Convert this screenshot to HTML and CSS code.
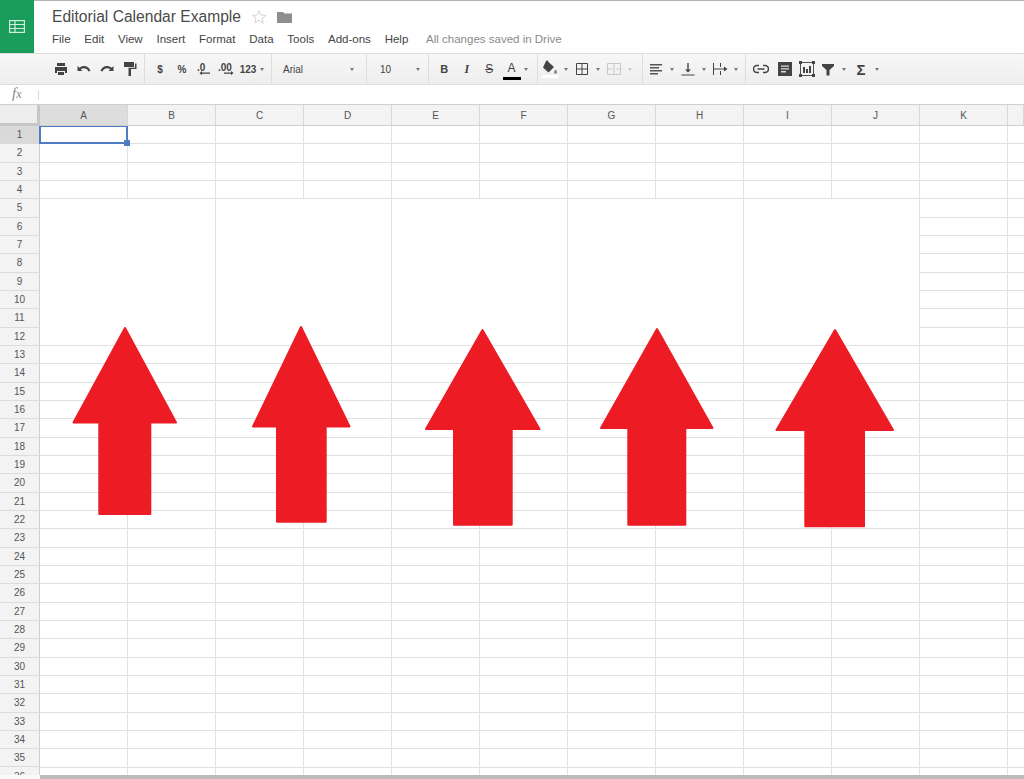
FILE: index.html
```html
<!DOCTYPE html>
<html lang="en">
<head>
    <meta charset="UTF-8">
    <title>Editorial Calendar Example</title>
    <link rel="stylesheet" href="styles.css">
</head>
<body>
<div class="page">

    <header class="topbar">
        <div class="logo">
            <svg width="18" height="15" viewBox="0 0 18 15" fill="none" stroke="#cfeedd" stroke-width="1.2">
                <rect x="1.6" y="1.6" width="14.8" height="11.8"/>
                <path d="M1.6 5.5h14.8M1.6 9.5h14.8M7 1.6v11.8"/>
            </svg>
        </div>
        <div class="doc">
            <div class="title-row">
                <span class="title">Editorial Calendar Example</span>
                <svg class="star" width="16" height="16" viewBox="0 0 16 16" fill="none" stroke="#d4d4d4">
                    <path d="M8 1.5l1.9 4.5 4.8.4-3.7 3.1 1.2 4.8L8 11.2l-4.2 2.6L5 9 1.300 6.400l4.800-.4z"/>
                </svg>
                <svg class="folder" width="15" height="12" viewBox="0 0 15 12" fill="#8e8e8e">
                    <path d="M0 1h6l1.500 1.500H15V12H0z"/>
                </svg>
            </div>
            <nav class="menu">
                <span>File</span><span>Edit</span><span>View</span><span>Insert</span><span>Format</span><span>Data</span><span>Tools</span><span>Add-ons</span><span>Help</span>
                <span class="saved">All changes saved in Drive</span>
            </nav>
        </div>
    </header>

    <div class="toolbar">
        <div class="tb-group g-print">
            <span class="tb-btn"><svg width="16" height="16" viewBox="0 0 16 16" fill="#444"><path d="M4 2h8v3H4zM2 6h12v6h-2v-2H4v2H2zM5 11h6v3H5z"/></svg></span>
            <span class="tb-btn"><svg width="16" height="16" viewBox="0 0 16 16" fill="#444"><path d="M1.500 5v5h5L4.700 8.300C7.300 6.300 11 7 12.500 10.500l2-.7C12.800 5 7.500 3.500 3.300 6.800z"/></svg></span>
            <span class="tb-btn"><svg width="16" height="16" viewBox="0 0 16 16" fill="#444"><path d="M14.500 5v5h-5l1.800-1.700C8.700 6.300 5 7 3.500 10.500l-2-.7C3.200 5 8.500 3.500 12.700 6.800z"/></svg></span>
            <span class="tb-btn"><svg width="16" height="16" viewBox="0 0 16 16" fill="#444"><path d="M2 1h10v5H2zM13 2.500h1.500V8H9v7H6.500V6.800h6.500z"/></svg></span>
        </div>
        <div class="tb-group g-number">
            <span class="tb-btn tb-text">$</span>
            <span class="tb-btn tb-text">%</span>
            <span class="tb-btn">
                <svg width="20" height="16" viewBox="0 0 20 16" fill="#444">
                    <text x="3" y="10" class="svg-label">.0</text>
                    <path d="M8 11.500h8v1.200H8zM8 10l-2.500 2.100L8 14.200z"/>
                </svg>
            </span>
            <span class="tb-btn">
                <svg width="20" height="16" viewBox="0 0 20 16" fill="#444">
                    <text x="2" y="10" class="svg-label">.00</text>
                    <path d="M8 11.500h8v1.200H8zM15 10l2.500 2.100-2.500 2.100z"/>
                </svg>
            </span>
            <span class="tb-btn tb-text">123</span>
            <span class="caret caret-near"></span>
        </div>
        <div class="tb-group g-font">
            <span class="tb-select">Arial</span>
            <span class="caret"></span>
        </div>
        <div class="tb-group g-size">
            <span class="tb-select">10</span>
            <span class="caret"></span>
        </div>
        <div class="tb-group g-style">
            <span class="tb-btn tb-bold">B</span>
            <span class="tb-btn tb-italic">I</span>
            <span class="tb-btn tb-strike">S</span>
            <span class="tb-btn tb-color">A</span>
            <span class="caret caret-near"></span>
        </div>
        <div class="tb-group g-fill">
            <span class="tb-btn"><svg width="20" height="20" viewBox="0 0 20 20" fill="#444"><path d="M6 2l1.200-.8L9 3.500l5 4.500-5.500 5.500L3 8.500z"/><path d="M15.500 10.500c1 1.300 1.500 2 1.500 2.700a1.500 1.500 0 0 1-3 0c0-.7.500-1.400 1.500-2.700z" fill="#888"/><rect x="2" y="16" width="16" height="3" fill="#fff"/></svg></span>
            <span class="caret"></span>
            <span class="tb-btn"><svg width="14" height="14" viewBox="0 0 14 14" fill="none" stroke="#444"><path d="M1.500 1.500h11v11h-11zM7 1.500v11M1.500 7h11"/></svg></span>
            <span class="caret"></span>
            <span class="tb-btn"><svg width="16" height="14" viewBox="0 0 16 14" fill="none" stroke="#c8c8c8"><path d="M1.500 1.500h13v11h-13zM8 1.500v11M1.500 7h4M10.500 7h4"/></svg></span>
            <span class="caret caret-off"></span>
        </div>
        <div class="tb-group g-align">
            <span class="tb-btn"><svg width="14" height="12" viewBox="0 0 14 12" fill="#555"><path d="M1 1h12v1.400H1zM1 4h9v1.400H1zM1 7h12v1.400H1zM1 10h8v1.400H1z"/></svg></span>
            <span class="caret"></span>
            <span class="tb-btn"><svg width="16" height="16" viewBox="0 0 16 16" fill="#444"><path d="M7.300 2h1.400v6.500H11L8 11.500 5 8.500h2.300zM1.500 13.500h13v1h-13z"/></svg></span>
            <span class="caret"></span>
            <span class="tb-btn"><svg width="16" height="16" viewBox="0 0 16 16" fill="#444"><path d="M1 2h1v12H1zM8 2h1v4H8zM8 10h1v4H8zM2 7.500h10V5.500L15.500 8 12 10.500V8.500H2z"/></svg></span>
            <span class="caret"></span>
        </div>
        <div class="tb-group g-insert">
            <span class="tb-btn tb-wide"><svg width="16" height="10" viewBox="0 0 16 10" fill="none" stroke="#444" stroke-width="1.600"><path d="M6 1.500H4a3.500 3.500 0 0 0 0 7h2M10 1.500h2a3.500 3.500 0 0 1 0 7h-2M4.500 5h7"/></svg></span>
            <span class="tb-btn tb-wide"><svg width="14" height="14" viewBox="0 0 14 14"><path d="M0 0h14v14H0z" fill="#444"/><path d="M3 3.500h8v1.300H3zM3 6.300h8v1.300H3zM3 9.100h5v1.300H3z" fill="#ddd"/></svg></span>
            <span class="tb-btn tb-narrow"><svg width="16" height="16" viewBox="0 0 16 16" fill="#444"><path d="M1.500 1.500h13v13h-13z" fill="none" stroke="#555"/><path d="M0 0h3v3H0zM13 0h3v3h-3zM0 13h3v3H0zM13 13h3v3h-3zM4 6h2v6H4zM7 8h2v4H7zM10 5h2v7h-2z"/></svg></span>
            <span class="tb-btn"><svg width="14" height="14" viewBox="0 0 14 14" fill="#444"><path d="M1 2h12v2L8.500 8v5.500h-3V8L1 4z"/></svg></span>
            <span class="caret caret-gap"></span>
            <span class="tb-btn tb-sigma">&Sigma;</span>
            <span class="caret"></span>
        </div>
    </div>

    <div class="formula-bar">
        <span class="fx">f<small>x</small></span>
        <span class="formula-sep"></span>
    </div>

    <div class="col-headers">
        <div class="corner"></div>
        <div class="col-head selected">A</div>
        <div class="col-head">B</div>
        <div class="col-head">C</div>
        <div class="col-head">D</div>
        <div class="col-head">E</div>
        <div class="col-head">F</div>
        <div class="col-head">G</div>
        <div class="col-head">H</div>
        <div class="col-head">I</div>
        <div class="col-head">J</div>
        <div class="col-head">K</div>
        <div class="col-head"></div>
    </div>

    <div class="sheet">
        <div class="row-head selected">1</div>
        <div class="row-head">2</div>
        <div class="row-head">3</div>
        <div class="row-head">4</div>
        <div class="row-head">5</div>
        <div class="row-head">6</div>
        <div class="row-head">7</div>
        <div class="row-head">8</div>
        <div class="row-head">9</div>
        <div class="row-head">10</div>
        <div class="row-head">11</div>
        <div class="row-head">12</div>
        <div class="row-head">13</div>
        <div class="row-head">14</div>
        <div class="row-head">15</div>
        <div class="row-head">16</div>
        <div class="row-head">17</div>
        <div class="row-head">18</div>
        <div class="row-head">19</div>
        <div class="row-head">20</div>
        <div class="row-head">21</div>
        <div class="row-head">22</div>
        <div class="row-head">23</div>
        <div class="row-head">24</div>
        <div class="row-head">25</div>
        <div class="row-head">26</div>
        <div class="row-head">27</div>
        <div class="row-head">28</div>
        <div class="row-head">29</div>
        <div class="row-head">30</div>
        <div class="row-head">31</div>
        <div class="row-head">32</div>
        <div class="row-head">33</div>
        <div class="row-head">34</div>
        <div class="row-head">35</div>
        <div class="row-head">36</div>

        <div class="active-cell"></div>

        <!-- merged cells A5:B12, C5:D12 ... -->
        <div class="merged m-ab"></div>
        <div class="merged m-cd"></div>
        <div class="merged m-ef"></div>
        <div class="merged m-gh"></div>
        <div class="merged m-ij"></div>
    </div>

    <div class="scrollbar"><div class="scroll-thumb"></div></div>

    <!-- arrows drawn over the sheet -->
    <svg class="arrows" width="1024" height="779" viewBox="0 0 1024 779">
        <path d="M125 328L176 422.500H150.300V514H99.300V422.500H73.500z"/>
        <path d="M301 327L349.500 426.500H325.700V521.700H277V426.500H253z"/>
        <path d="M482.500 330L539.500 429H511.700V524.700H454V429H426z"/>
        <path d="M657 329L712.500 428H685.300V524.700H628.300V428H601z"/>
        <path d="M835 330L893 430H864V526.300H805.300V430H776.500z"/>
    </svg>

</div>
</body>
</html>
```

FILE: styles.css
```css
html, body {
    margin: 0;
    padding: 0;
    height: 100%;
    overflow: hidden;
}

body {
    font-family: "Liberation Sans", Arial, sans-serif;
    color: #444;
    background: #fff;
}

.page {
    position: relative;
    display: flex;
    flex-direction: column;
    height: 779px;
    overflow: hidden;
}

/* title + menu */
.topbar {
    display: flex;
    height: 53px;
    flex: none;
}

.logo {
    width: 34px;
    display: flex;
    align-items: center;
    justify-content: center;
    background: #1a9c5b;
    flex: none;
}

.doc {
    flex: 1;
    border-top: 1px solid #b4b4b4;
    padding-left: 18px;
}

.title-row {
    display: flex;
    align-items: center;
    height: 31px;
}

.title {
    font-size: 15.6px;
    color: #4a4a4a;
}

.star {
    margin-left: 10px;
}

.folder {
    margin-left: 10px;
}

.menu {
    display: flex;
    gap: 13.8px;
    font-size: 11.5px;
    line-height: 14px;
    color: #444;
}

.saved {
    margin-left: 4px;
    color: #8a8a8a;
}

/* toolbar */
.toolbar {
    display: flex;
    height: 32px;
    flex: none;
    box-sizing: border-box;
    background: linear-gradient(#f7f7f7, #eeeeee);
    border-top: 1px solid #dcdcdc;
    border-bottom: 1px solid #dedede;
}

.tb-group {
    display: flex;
    align-items: center;
    box-sizing: border-box;
    border-right: 1px solid #dddddd;
    flex: none;
}

.g-print { width: 145px; padding-left: 49px; }
.g-number { width: 127px; padding-left: 4px; }
.g-font { width: 95px; padding-left: 11px; }
.g-size { width: 62px; padding-left: 13px; }
.g-style { width: 109px; padding-left: 4px; }
.g-fill { width: 105px; padding-left: 1px; }
.g-align { width: 103px; padding-left: 2px; }
.g-insert { flex: 1; padding-left: 3px; border-right: none; }

.tb-btn {
    display: flex;
    align-items: center;
    justify-content: center;
    width: 22px;
    height: 24px;
    flex: none;
    font-size: 10px;
    color: #444;
}

.g-print .tb-btn { width: 23px; }
.g-style .tb-btn { width: 22.5px; }
.tb-wide { width: 24px !important; }
.tb-narrow { width: 20px !important; }

.tb-text {
    font-weight: bold;
}

.tb-select {
    font-size: 10px;
    color: #444;
}

.g-font .tb-select { width: 64px; }
.g-size .tb-select { width: 33px; }

.svg-label {
    font-family: "Liberation Sans", Arial, sans-serif;
    font-size: 10px;
    font-weight: bold;
}

.tb-bold {
    font-size: 11px;
    font-weight: bold;
}

.tb-italic {
    font-family: "Liberation Serif", serif;
    font-size: 12px;
    font-style: italic;
    font-weight: bold;
}

.tb-strike {
    font-size: 12px;
    text-decoration: line-through;
}

.tb-color {
    font-size: 12px;
    height: 18px;
    align-items: flex-start;
    line-height: 13px;
    margin-top: 3px;
    box-sizing: border-box;
    border-bottom: 3px solid #000;
    width: 18px !important;
    margin-left: 2px;
    margin-right: 2.500px;
}

.tb-sigma {
    font-size: 15px;
    font-weight: bold;
}

.caret {
    width: 10px;
    height: 3px;
    flex: none;
    display: flex;
    justify-content: center;
}

.caret::before {
    content: "";
    border-left: 2.500px solid transparent;
    border-right: 2.500px solid transparent;
    border-top: 3px solid #777;
}

.caret-off::before {
    border-top-color: #c8c8c8;
}

.caret-gap {
    margin-right: 1px;
}

.caret-near {
    margin-left: -2px;
}

/* formula bar */
.formula-bar {
    display: flex;
    align-items: center;
    height: 19px;
    margin-top: 1px;
    flex: none;
    box-sizing: border-box;
    border-bottom: 1px solid #cfcfcf;
    background: #fff;
}

.fx {
    width: 38px;
    padding-left: 12px;
    box-sizing: border-box;
    font-family: "Liberation Serif", serif;
    font-style: italic;
    font-size: 15px;
    line-height: 15px;
    margin-top: -2px;
    color: #888;
}

.fx small {
    font-size: 12px;
}

.formula-sep {
    width: 1px;
    height: 10px;
    background: #dadada;
}

/* column headers */
.col-headers {
    display: grid;
    grid-template-columns: 40px repeat(11, 88px) 1fr;
    height: 21px;
    flex: none;
    box-sizing: border-box;
    border-bottom: 1px solid #cfcfcf;
    background: #f3f3f3;
}

.corner {
    box-sizing: border-box;
    background: #ededed;
    border-right: 3px solid #c6c6c6;
    border-bottom: 3px solid #c6c6c6;
    margin-bottom: -1px;
}

.col-head {
    display: flex;
    align-items: center;
    justify-content: center;
    box-sizing: border-box;
    border-right: 1px solid #d8d8d8;
    font-size: 10px;
    color: #555;
}

.col-head.selected {
    background: #dddddd;
}

/* cells: grid lines are painted on the sheet, 88px wide and 18.33px high */
.sheet {
    flex: 1;
    min-height: 0;
    overflow: hidden;
    display: grid;
    grid-template-columns: 40px repeat(11, 88px) 1fr;
    grid-auto-rows: 18.33px;
    background-color: #fff;
    background-image:
        repeating-linear-gradient(to bottom, transparent 0, transparent 17.33px, #e0e0e0 17.33px, #e0e0e0 18.33px),
        repeating-linear-gradient(to right, transparent 0, transparent 87px, #e2e2e2 87px, #e2e2e2 88px);
    background-position: 40px 0;
    background-repeat: no-repeat;
}

.row-head {
    grid-column: 1;
    display: flex;
    align-items: center;
    justify-content: center;
    box-sizing: border-box;
    background: #f3f3f3;
    border-right: 1px solid #cfcfcf;
    border-bottom: 1px solid #dcdcdc;
    font-size: 10px;
    color: #555;
}

.row-head.selected {
    background: #d9d9d9;
}

.active-cell {
    grid-row: 1;
    grid-column: 2;
    position: relative;
    box-sizing: border-box;
    margin-left: -1px;
    border: 2px solid #4d7cc4;
    border-top-width: 1px;
    z-index: 1;
}

.active-cell::after {
    content: "";
    position: absolute;
    right: -4px;
    bottom: -4px;
    width: 6px;
    height: 6px;
    background: #4d7cc4;
}

.merged {
    grid-row: 5 / 13;
    box-sizing: border-box;
    background: #fff;
    border-right: 1px solid #e2e2e2;
    border-bottom: 1px solid #e0e0e0;
}

.m-ab { grid-column: 2 / 4; }
.m-cd { grid-column: 4 / 6; }
.m-ef { grid-column: 6 / 8; }
.m-gh { grid-column: 8 / 10; }
.m-ij { grid-column: 10 / 12; }

.scrollbar {
    height: 4px;
    flex: none;
    padding-left: 40px;
    background: #fafafa;
}

.scroll-thumb {
    height: 100%;
    background: #bcbcbc;
}

.arrows {
    position: absolute;
    top: 0;
    left: 0;
    pointer-events: none;
}

.arrows path {
    fill: #ed1c24;
    stroke: #ed1c24;
    stroke-width: 2;
    stroke-linejoin: round;
}
```
